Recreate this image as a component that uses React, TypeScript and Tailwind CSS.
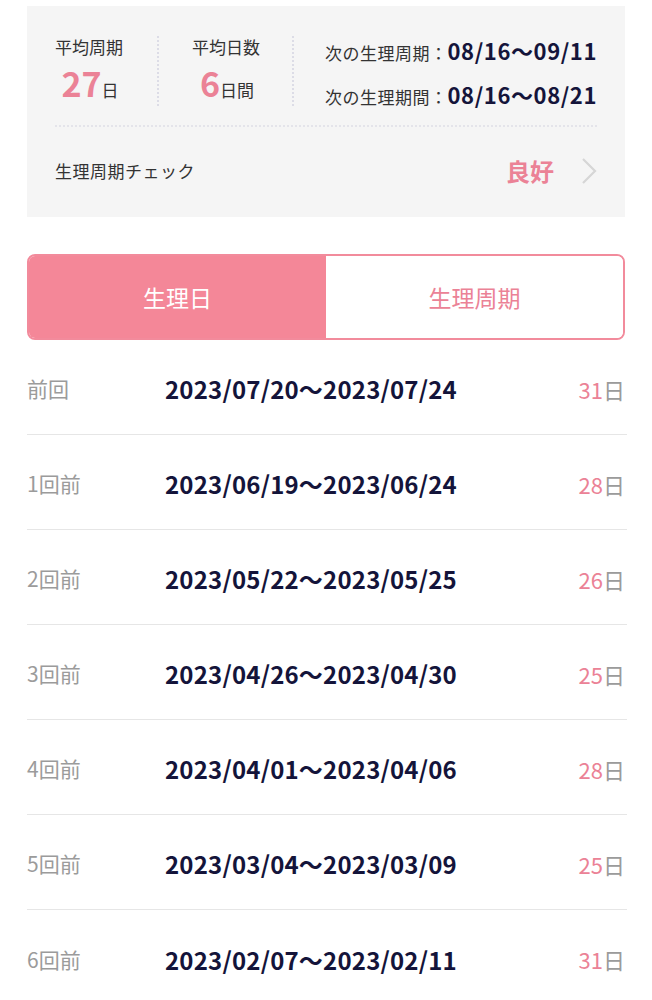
import React from "react";

const rows = [
  { label: "前回", range: "2023/07/20〜2023/07/24", days: 31 },
  { label: "1回前", range: "2023/06/19〜2023/06/24", days: 28 },
  { label: "2回前", range: "2023/05/22〜2023/05/25", days: 26 },
  { label: "3回前", range: "2023/04/26〜2023/04/30", days: 25 },
  { label: "4回前", range: "2023/04/01〜2023/04/06", days: 28 },
  { label: "5回前", range: "2023/03/04〜2023/03/09", days: 25 },
  { label: "6回前", range: "2023/02/07〜2023/02/11", days: 31 },
];

const font = {
  fontFamily: '"Noto Sans CJK JP", "Noto Sans", sans-serif',
};

export default function App() {
  return (
    <div className="w-[652px] bg-white pt-[6px] px-[27px]" style={font}>
      {/* summary card */}
      <div className="bg-[#f5f5f5] h-[211px] px-[28px] pt-[24px]">
        <div className="flex h-[76px]">
          <div className="w-[102px] pt-[6px] flex flex-col items-start">
            <p className="text-[17px] leading-[22px] text-[#333]">平均周期</p>
            <p className="w-[70px] text-center leading-[44px] mt-[3px]">
              <span className="text-[34px] font-bold text-[#eb8296]">27</span>
              <span className="text-[17px] text-[#333]">日</span>
            </p>
          </div>
          <div className="border-l-2 border-dotted border-[#dcdce6] h-[70px] mt-[6px]" />
          <div className="w-[133px] pl-[33px] pt-[6px] flex flex-col items-start">
            <p className="text-[17px] leading-[22px] text-[#333]">平均日数</p>
            <p className="w-[70px] text-center leading-[44px] mt-[3px]">
              <span className="text-[34px] font-bold text-[#eb8296]">6</span>
              <span className="text-[17px] text-[#333]">日間</span>
            </p>
          </div>
          <div className="border-l-2 border-dotted border-[#dcdce6] h-[70px] mt-[6px]" />
          <div className="flex-1 flex flex-col items-end">
            <p className="leading-[41px] whitespace-nowrap">
              <span className="text-[17px] text-[#333] tracking-[0.5px]">次の生理周期：</span>
              <span className="text-[22px] font-semibold text-[#14143a] tracking-[0.6px]">08/16〜09/11</span>
            </p>
            <p className="leading-[41px] whitespace-nowrap">
              <span className="text-[17px] text-[#333] tracking-[0.5px]">次の生理期間：</span>
              <span className="text-[22px] font-semibold text-[#14143a] tracking-[0.6px]">08/16〜08/21</span>
            </p>
          </div>
        </div>
        <div className="border-t-2 border-dotted border-[#e4e4ea] mt-[19px]" />
        <div className="flex items-center h-[90px] pb-[2px]">
          <p className="flex-1 text-[17px] text-[#333] tracking-[0.5px]">生理周期チェック</p>
          <p className="text-[24px] font-bold text-[#eb8296] mr-[26px]">良好</p>
          <svg width="18" height="30" viewBox="0 0 18 30" className="mr-[-1px]">
            <path d="M3 3 L15 15 L3 27" fill="none" stroke="#d6d6d6" strokeWidth="2.2" />
          </svg>
        </div>
      </div>

      {/* tabs */}
      <div className="mt-[37px] flex h-[86px] rounded-[8px] border-2 border-[#f28b9c] overflow-hidden">
        <div className="w-1/2 bg-[#f48798] flex items-center justify-center text-[23px] text-white">
          生理日
        </div>
        <div className="w-1/2 bg-white flex items-center justify-center text-[23px] text-[#eb8296]">
          生理周期
        </div>
      </div>

      {/* history */}
      <div className="mr-[-2px]">
        {rows.map((r, i) => (
          <div
            key={r.label}
            className={`flex items-center h-[95px] pt-[4px] ${i < rows.length - 1 ? "border-b border-[#e6e6e6]" : ""}`}
          >
            <p className="w-[138px] text-[21px] text-[#9b9b9b]">{r.label}</p>
            <p className="flex-1 text-[24px] font-semibold text-[#14143a] tracking-[0.2px]">{r.range}</p>
            <p className="mr-[2px]">
              <span className="text-[22px] text-[#eb8296]">{r.days}</span>
              <span className="text-[22px] text-[#9b9b9b]">日</span>
            </p>
          </div>
        ))}
      </div>
    </div>
  );
}
